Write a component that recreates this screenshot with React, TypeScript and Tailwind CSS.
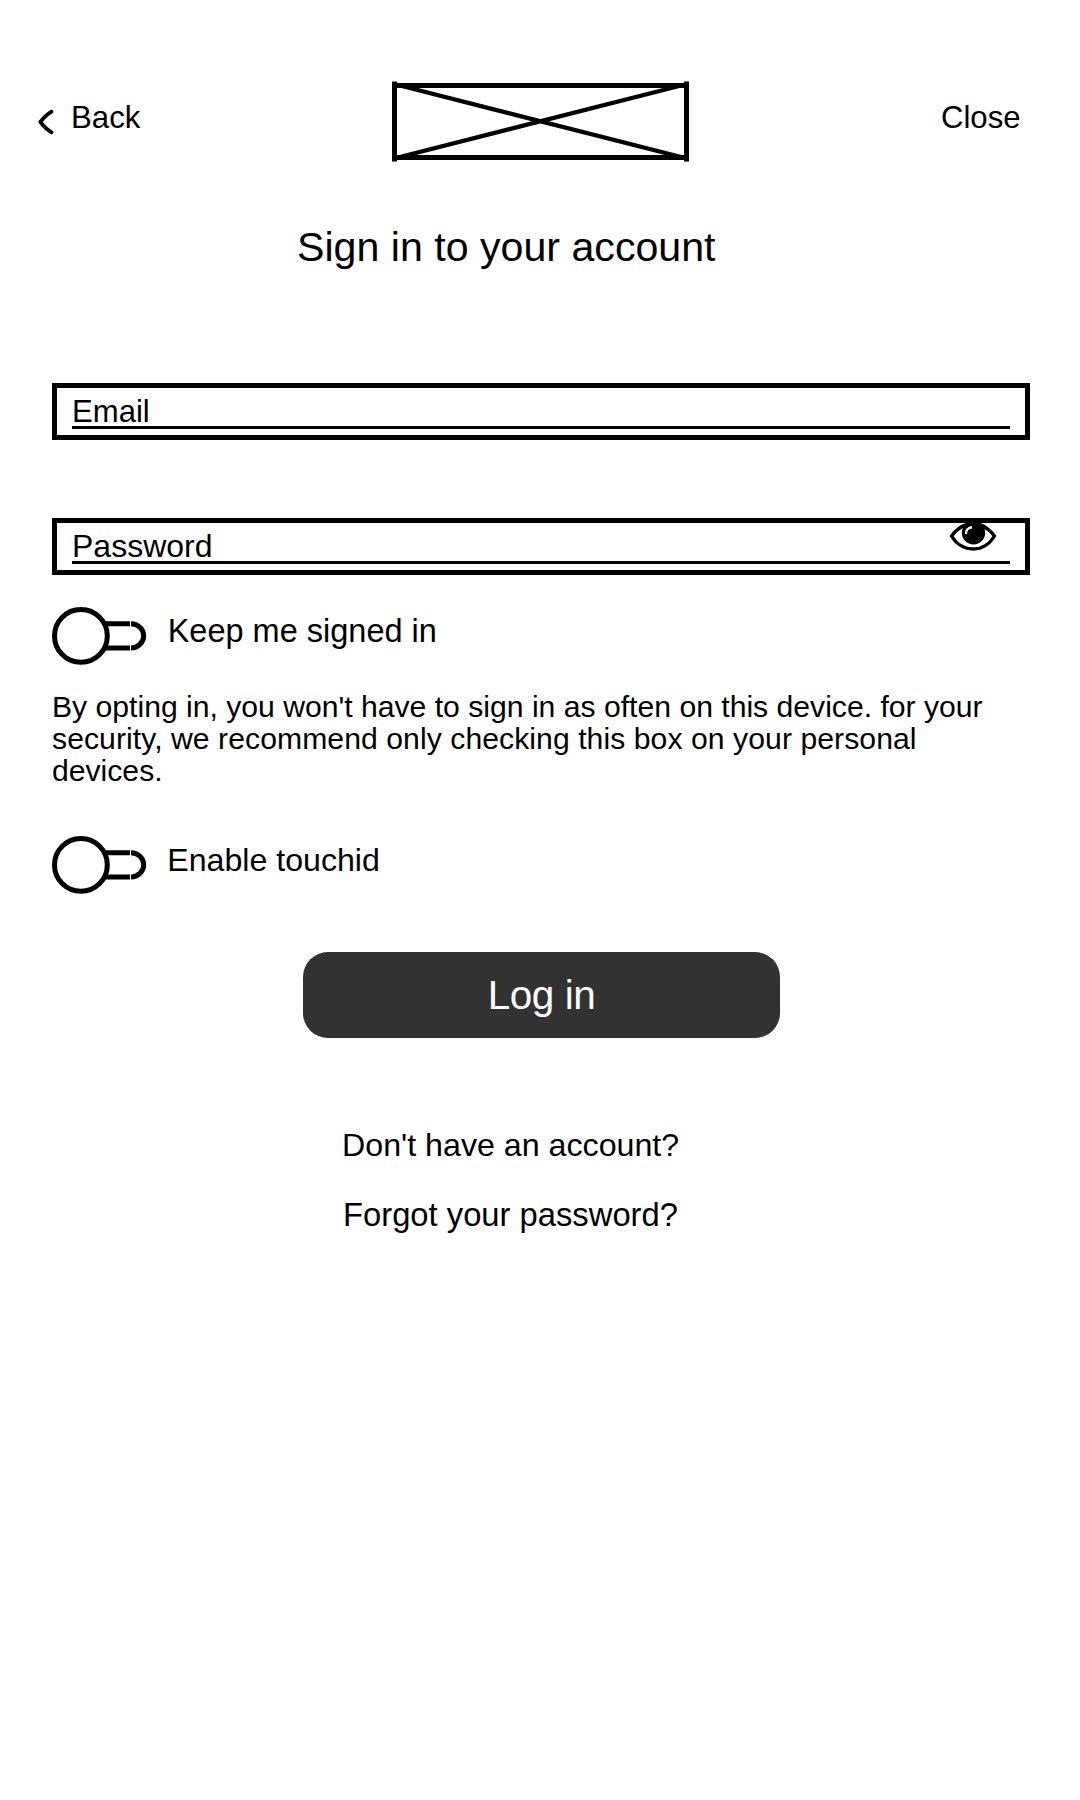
import React, { useState } from "react";

function Chevron() {
  return (
    <svg className="mt-[32px] h-[27px] w-5 shrink-0" viewBox="0 0 20 27" fill="none" stroke="black" strokeWidth="3.800" strokeLinejoin="round" strokeLinecap="round">
      <path d="M16.500 2.700C12.500 5 8.500 9 5.300 13C8.500 17 12.500 21 16.500 23.300" />
    </svg>
  );
}

function Logo() {
  return (
    <svg className="mt-1 h-[81px] w-[297px] shrink-0" viewBox="0 0 297 81" fill="none" stroke="black">
      <path d="M2.500 0.500V80.500M294.500 0.500V80.500M0 4.500H297M0 76.500H297" strokeWidth="5" />
      <path d="M2 3L295 77.500M295 3L2 77.500" strokeWidth="4.200" />
    </svg>
  );
}

function Eye() {
  return (
    <svg className="absolute top-0 right-[28px] h-[29px] w-12" viewBox="0 0 48 29" fill="none">
      <path d="M2.500 13C9 4 16 0.500 24.500 0.500C33 0.500 39 4.500 45.500 13C40 22 33 26 24.500 26C15 26 8 22 2.500 13Z" stroke="black" strokeWidth="3.300" strokeLinejoin="round" />
      <circle cx="24.500" cy="9.800" r="11.700" fill="black" />
      <path d="M17 11C16.500 7 19.500 4.500 23 4.300" stroke="white" strokeWidth="2.400" />
    </svg>
  );
}

function Field({ label, className, children }: { label: string; className: string; children?: React.ReactNode }) {
  return (
    <div className="relative h-[57px] border-[5px] border-black px-[15px]">
      <div className={`h-[41px] border-b-[3px] border-black ${className}`}>{label}</div>
      {children}
    </div>
  );
}

function Toggle({ label, className }: { label: string; className: string }) {
  const [on, setOn] = useState(false);
  return (
    <button type="button" role="switch" aria-checked={on} onClick={() => setOn(!on)} className="flex h-[58px] text-left">
      <svg className="h-[58px] w-[95px] shrink-0" viewBox="0 0 95 58" fill="none" stroke="black" strokeWidth="5">
        <g transform={on ? "translate(94.500 0) scale(-1 1)" : undefined}>
          <path d="M50 16.700H78M50 40.900H78" />
          <path d="M79 16.700A12.700 12.100 0 0 1 79 40.900" />
          <ellipse cx="28.900" cy="28.900" rx="26.400" ry="26.400" fill="white" />
        </g>
      </svg>
      <span className={className}>{label}</span>
    </button>
  );
}

export default function App() {
  return (
    <main className="h-[1800px] w-[1080px] overflow-hidden bg-white pt-[77px] font-['Liberation_Sans',Arial,sans-serif] text-black">
      <header className="flex h-[100px] pl-[35px]">
        <Chevron />
        <button type="button" className="mt-[21px] ml-4 h-10 w-[321px] text-left text-[31.200px] leading-10">Back</button>
        <Logo />
        <button type="button" className="mt-[21px] ml-[252px] h-10 text-[31.100px] leading-10">Close</button>
      </header>
      <h1 className="mt-[45px] ml-[297px] h-[50px] text-[41.150px] leading-[50px] whitespace-nowrap">Sign in to your account</h1>
      <form className="mt-[111px] pr-[50px] pl-[52px]" onSubmit={(e) => e.preventDefault()}>
        <Field label="Email" className="pt-1 text-[31.100px] leading-10" />
        <div className="h-[78px]" />
        <Field label="Password" className="pt-[3px] text-[32px] leading-10">
          <Eye />
        </Field>
        <div className="mt-8">
          <Toggle label="Keep me signed in" className="mt-[4px] ml-[20.700px] text-[32.500px] leading-10 whitespace-nowrap" />
        </div>
        <p className="mt-[26px] text-[30.150px] leading-8 whitespace-nowrap">
          By opting in, you won't have to sign in as often on this device. for your
          <br />
          <span className="tracking-[0.065px]">security, we recommend only checking this box on your personal</span>
          <br />
          devices.
        </p>
        <div className="mt-[49px]">
          <Toggle label="Enable touchid" className="mt-[4px] ml-[20.200px] text-[32.150px] leading-10 whitespace-nowrap" />
        </div>
        <button type="submit" className="mt-[58px] ml-[251px] block h-[86px] w-[477px] rounded-[25px] bg-[#323232] pt-px text-center text-[40.500px] leading-[85px] tracking-[-0.500px] text-white">
          Log in
        </button>
      </form>
      <nav className="mt-[87px] flex flex-col items-start pl-[342px]">
        <a href="#signup" className="h-10 text-[32.200px] leading-10 whitespace-nowrap">Don't have an account?</a>
        <a href="#reset" className="mt-[30px] ml-px h-10 text-[32.750px] leading-10 whitespace-nowrap">Forgot your password?</a>
      </nav>
    </main>
  );
}
